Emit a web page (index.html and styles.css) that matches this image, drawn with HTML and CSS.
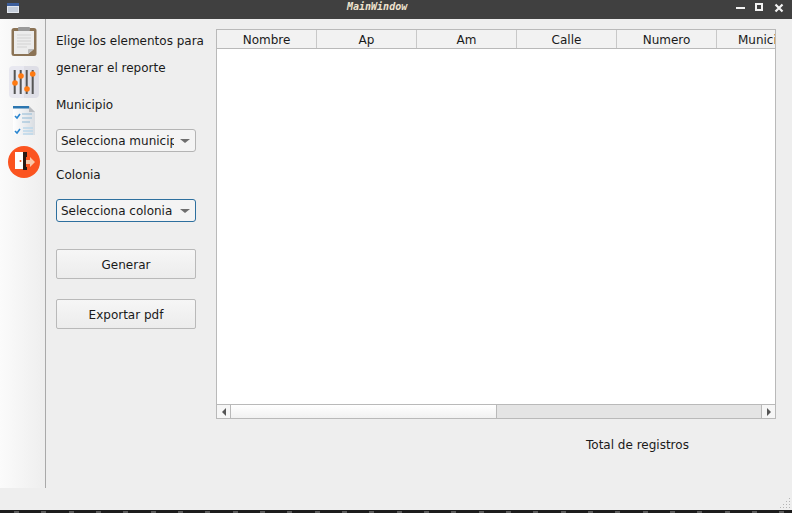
FILE: index.html
```html
<!DOCTYPE html>
<html lang="en">
<head>
    <meta charset="UTF-8">
    <title>MainWindow</title>
    <link rel="stylesheet" href="styles.css">
</head>
<body>
    <header class="titlebar">
        <svg class="app-icon" width="12" height="10" viewBox="0 0 12 10">
            <rect x="0" y="0" width="12" height="10" fill="#e4e8ee"/>
            <rect x="0" y="0" width="12" height="3" fill="#3d5f9c"/>
            <rect x="1" y="4" width="10" height="5" fill="#c5cedb"/>
        </svg>
        <span class="window-title">MainWindow</span>
        <div class="window-buttons">
            <svg width="10" height="10" viewBox="0 0 10 10"><rect x="0" y="4" width="9" height="2" fill="#f2f2f2"/></svg>
            <svg width="10" height="10" viewBox="0 0 10 10"><rect x="1" y="1" width="6" height="6" fill="none" stroke="#f2f2f2" stroke-width="2"/></svg>
            <svg width="10" height="10" viewBox="0 0 10 10"><path d="M1.5 1.5 8.5 8.5M8.5 1.5 1.5 8.5" stroke="#f2f2f2" stroke-width="2.2"/></svg>
        </div>
    </header>

    <div class="window-body">
        <nav class="sidebar">
            <div class="side-item">
                <svg width="28" height="32" viewBox="0 1 28 32">
                    <rect x="1.5" y="3" width="25" height="28" rx="2.5" fill="#8b7355"/>
                    <path d="M4 6H24V24L18 29H4Z" fill="#ececec"/>
                    <path d="M18 29 24 24H19Q18 24 18 25Z" fill="#bdbdbd"/>
                    <path d="M7 10H21M7 13H21M7 16H21M7 19H21M7 22H17" stroke="#d2d2d2" stroke-width="1"/>
                    <rect x="8" y="2" width="12" height="4" rx="1" fill="#9a9a9a"/>
                </svg>
            </div>
            <div class="side-item">
                <div class="slider-tile">
                    <svg width="30" height="32" viewBox="0 0 30 32">
                        <path d="M5.7 4V28M11.7 4V28M17.7 4V28M23.7 4V28" stroke="#555" stroke-width="2"/>
                        <circle cx="6" cy="17" r="2.8" fill="#ff7a12"/>
                        <circle cx="12" cy="10" r="2.8" fill="#ff7a12"/>
                        <circle cx="18" cy="23" r="2.8" fill="#ff7a12"/>
                        <circle cx="23.7" cy="8" r="2.8" fill="#ff7a12"/>
                    </svg>
                </div>
            </div>
            <div class="side-item">
                <svg width="24" height="32" viewBox="0 2 24 32">
                    <defs>
                        <linearGradient id="page-shade" x1="0" x2="1" y1="0" y2="0">
                            <stop offset="0" stop-color="#ffffff"/>
                            <stop offset="1" stop-color="#d9dde2"/>
                        </linearGradient>
                    </defs>
                    <path d="M1 2H17L23 8V31H4L1 28Z" fill="url(#page-shade)"/>
                    <path d="M17 2 23 8H17Z" fill="#b9bcc0"/>
                    <rect x="1" y="2" width="16" height="2.5" fill="#2b76b0"/>
                    <path d="M3 12 5 14 8 10M3 27 5 29 8 25" fill="none" stroke="#2a86d0" stroke-width="1.6"/>
                    <path d="M10 10H20M10 14H20M10 18H18" stroke="#8fb9d6" stroke-width="1.2"/>
                    <path d="M11 24H21M11 27H21M11 30H21" stroke="#bcd8ea" stroke-width="1.6"/>
                </svg>
            </div>
            <div class="side-item">
                <svg width="32" height="32" viewBox="0 0 32 32">
                    <circle cx="16" cy="16" r="16" fill="#fb5420"/>
                    <path d="M7 6H15V23H7Z" fill="#fff"/>
                    <path d="M15 6H19V11H18V21H19V24H15Z" fill="#2a1a14"/>
                    <circle cx="12.5" cy="15" r="1" fill="#fb5420"/>
                    <path d="M18 14H22V11L27 16 22 21V18H18Z" fill="#fbc7a8"/>
                </svg>
            </div>
        </nav>

        <main class="content">
            <section class="form-panel">
                <p class="label intro">Elige los elementos para</p>
                <p class="label intro-second">generar el reporte</p>
                <p class="label municipio-label">Municipio</p>
                <div class="combo">
                    <span class="combo-text">Selecciona municipio</span>
                    <span class="combo-arrow"></span>
                </div>
                <p class="label colonia-label">Colonia</p>
                <div class="combo combo-focus">
                    <span class="combo-text">Selecciona colonia</span>
                    <span class="combo-arrow"></span>
                </div>
                <button class="btn btn-generate">Generar</button>
                <button class="btn btn-export">Exportar pdf</button>
            </section>

            <section class="report">
                <div class="table">
                    <div class="table-head">
                        <div class="th">Nombre</div>
                        <div class="th">Ap</div>
                        <div class="th">Am</div>
                        <div class="th">Calle</div>
                        <div class="th">Numero</div>
                        <div class="th">Municipio</div>
                    </div>
                    <div class="table-rows"></div>
                    <div class="scrollbar">
                        <div class="scroll-btn scroll-left"><span class="arrow-left"></span></div>
                        <div class="scroll-handle"></div>
                        <div class="scroll-trough"></div>
                        <div class="scroll-btn scroll-right"><span class="arrow-right"></span></div>
                    </div>
                </div>
                <p class="label total">Total de registros</p>
            </section>
        </main>
    </div>

    <footer class="footer-gap">
        <svg class="size-grip" width="11" height="11" viewBox="0 0 11 11">
            <path d="M9 0h1v1H9ZM6 3h1v1H6ZM9 3h1v1H9ZM3 6h1v1H3ZM6 6h1v1H6ZM9 6h1v1H9ZM0 9h1v1H0ZM3 9h1v1H3ZM6 9h1v1H6ZM9 9h1v1H9Z" fill="#b4b4b4"/>
        </svg>
    </footer>
    <div class="desktop-strip"></div>
</body>
</html>
```

FILE: styles.css
```css
* {
    box-sizing: border-box;
    margin: 0;
    padding: 0;
}

body {
    width: 792px;
    height: 513px;
    overflow: hidden;
    display: flex;
    flex-direction: column;
    background-color: #eeeeee;
    color: #1a1a1a;
    font-family: "DejaVu Sans", sans-serif;
    font-size: 12px;
}

.titlebar {
    height: 19px;
    flex: none;
    display: flex;
    align-items: flex-start;
    justify-content: space-between;
    padding: 3px 8px 0 7px;
    background-color: #404040;
    position: relative;
}

.window-title {
    position: absolute;
    left: 347px;
    top: 0;
    line-height: 14px;
    font-family: "DejaVu Sans Mono", monospace;
    font-style: italic;
    font-weight: bold;
    font-size: 10px;
    color: #f0e4cf;
}

.window-buttons {
    display: flex;
    gap: 9px;
}

.window-body {
    height: 469px;
    flex: none;
    display: flex;
}

.sidebar {
    width: 46px;
    flex: none;
    padding: 3px 0 0 3px;
    border-right: 1px solid #a9a9a9;
    background: linear-gradient(to right, #fbfbfb, #eeeeee);
}

.side-item {
    height: 40px;
    display: flex;
    align-items: center;
    justify-content: center;
}

.slider-tile {
    width: 30px;
    height: 32px;
    border-radius: 4px;
    background: linear-gradient(to right, #e8e8f0 50%, #dedee6 50%);
}

.content {
    flex: 1;
    display: flex;
}

.form-panel {
    width: 170px;
    flex: none;
    padding: 13px 0 0 10px;
}

.label {
    line-height: 18px;
}

.intro-second {
    margin-top: 9px;
}

.municipio-label {
    margin-top: 19px;
}

.colonia-label {
    margin-top: 14px;
}

.combo {
    width: 140px;
    height: 23px;
    margin-top: 15px;
    display: flex;
    align-items: center;
    padding: 0 10px 0 4px;
    border: 1px solid #b4b4b4;
    border-radius: 3px;
    background-color: #f4f4f4;
}

.combo-focus {
    border-color: #2d6f9e;
}

.combo-text {
    width: 113px;
    flex: none;
    overflow: hidden;
    white-space: nowrap;
}

.combo-arrow {
    margin-left: 6px;
    border-left: 5px solid transparent;
    border-right: 5px solid transparent;
    border-top: 4px solid #6e6e6e;
}

.btn {
    display: block;
    width: 140px;
    height: 30px;
    padding-top: 2px;
    border: 1px solid #b9b9b9;
    border-radius: 2px;
    background: linear-gradient(to bottom, #f6f6f6, #ececec);
    color: #1a1a1a;
    font-family: "DejaVu Sans", sans-serif;
    font-size: 12px;
}

.btn-generate {
    margin-top: 27px;
}

.btn-export {
    margin-top: 20px;
}

.report {
    width: 560px;
    padding-top: 10px;
}

.table {
    height: 390px;
    display: flex;
    flex-direction: column;
    overflow: hidden;
    border: 1px solid #b9b9b9;
    background-color: #ffffff;
}

.table-head {
    height: 19px;
    flex: none;
    display: flex;
    border-bottom: 1px solid #b9b9b9;
    background-color: #f2f2f2;
}

.th {
    width: 100px;
    flex: none;
    line-height: 20px;
    text-align: center;
    border-right: 1px solid #c8c8c8;
}

.table-rows {
    flex: 1;
}

.scrollbar {
    height: 14px;
    flex: none;
    display: flex;
    border-top: 1px solid #b9b9b9;
}

.scroll-btn {
    width: 14px;
    flex: none;
    display: flex;
    align-items: center;
    justify-content: center;
    background-color: #f6f6f6;
}

.scroll-left {
    border-right: 1px solid #b9b9b9;
}

.scroll-right {
    border-left: 1px solid #b9b9b9;
}

.arrow-left {
    border-top: 4px solid transparent;
    border-bottom: 4px solid transparent;
    border-right: 4px solid #555555;
}

.arrow-right {
    border-top: 4px solid transparent;
    border-bottom: 4px solid transparent;
    border-left: 4px solid #555555;
}

.scroll-handle {
    width: 266px;
    flex: none;
    border-right: 1px solid #b9b9b9;
    background: linear-gradient(to bottom, #ffffff, #f1f1f1);
}

.scroll-trough {
    flex: 1;
    background-color: #e4e4e4;
}

.total {
    margin-top: 17px;
    padding-left: 370px;
}

.footer-gap {
    flex: 1;
    position: relative;
}

.size-grip {
    position: absolute;
    right: 1px;
    bottom: 1px;
}

.desktop-strip {
    height: 3px;
    flex: none;
    background-color: #1c1c1c;
    background-image: repeating-linear-gradient(to right, #1c1c1c 0 14px, #5c5c5c 14px 19px, #1c1c1c 19px 27.33px);
    background-size: 100% 2px;
    background-position: 0 1px;
    background-repeat: no-repeat;
}
```
